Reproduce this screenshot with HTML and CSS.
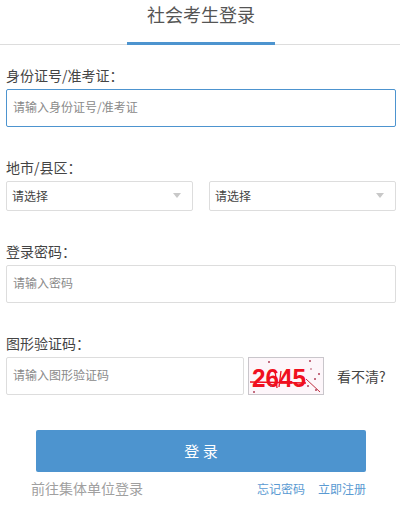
FILE: index.html
```html
<!DOCTYPE html>
<html lang="zh-CN">
<head>
<meta charset="utf-8">
<title>社会考生登录</title>
<link rel="stylesheet" href="styles.css">
</head>
<body>
<header class="tabs"><div class="tab">社会考生登录</div></header>
<form class="form">
  <div class="field first">
    <label class="label">身份证号/准考证：</label>
    <div class="input focus">请输入身份证号/准考证</div>
  </div>
  <div class="field region">
    <label class="label">地市/县区：</label>
    <div class="selects">
      <div class="select">请选择<span class="caret"></span></div>
      <div class="select">请选择<span class="caret"></span></div>
    </div>
  </div>
  <div class="field pass">
    <label class="label">登录密码：</label>
    <div class="input">请输入密码</div>
  </div>
  <div class="field code">
    <label class="label">图形验证码：</label>
    <div class="code-row">
      <div class="input code-input">请输入图形验证码</div>
      <svg class="captcha" width="76" height="38" viewBox="0 0 76 38">
        <rect x="0.5" y="0.5" width="75" height="37" fill="#fdf6fa" stroke="#c9c6cb"/>
        <text x="4" y="30" class="captcha-text" textLength="54" lengthAdjust="spacingAndGlyphs">2645</text>
        <path d="M2 25 L58 26 M27 13 L29 31 M33 14 L31 30" stroke="#f01020" stroke-width="1.3" fill="none"/>
        <path d="M58 22 L72 35" stroke="#c03040" stroke-width="1" fill="none"/>
        <g fill="#b04058"><circle cx="21" cy="5" r="1"/><circle cx="62" cy="4" r="1"/><circle cx="71" cy="17" r="1"/><circle cx="67" cy="22" r="1"/><circle cx="60" cy="29" r="1"/><circle cx="6" cy="35" r="1"/><circle cx="23" cy="29" r="1"/><circle cx="63" cy="12" r="0.8"/><circle cx="68" cy="33" r="1"/></g>
      </svg>
      <span class="refresh">看不清?</span>
    </div>
  </div>
  <button type="button" class="submit">登 录</button>
  <div class="links">
    <span class="unit">前往集体单位登录</span>
    <span class="right"><span class="link">忘记密码</span><span class="link">立即注册</span></span>
  </div>
</form>
</body>
</html>
```
FILE: styles.css
```css
* { box-sizing: border-box; }
html, body { margin: 0; padding: 0; }
body {
  width: 400px;
  height: 506px;
  overflow: hidden;
  background: #fff;
  color: #333;
  font-family: "Noto Sans CJK SC", "Noto Sans", sans-serif;
  font-size: 14px;
}
.tabs {
  height: 45px;
  border-bottom: 1px solid #ddd;
  display: flex;
  justify-content: center;
}
.tab {
  width: 148px;
  height: 45px;
  margin-left: 2px;
  border-bottom: 3px solid #4d94cf;
  text-align: center;
  font-size: 18px;
  line-height: 28px;
  color: #555;
}
.form { padding: 0 4px 0 6px; }
.field { display: flex; flex-direction: column; }
.first { margin-top: 21px; }
.region, .pass, .code { margin-top: 31px; }
.label {
  height: 23px;
  line-height: 18px;
  font-size: 14px;
  color: #444;
}
.input {
  height: 38px;
  border: 1px solid #ddd;
  border-radius: 2px;
  padding-left: 6px;
  line-height: 34px;
  font-size: 12px;
  color: #8a8a8a;
}
.input.focus { border-color: #4d94cf; }
.selects { display: flex; gap: 16px; }
.select {
  flex: 1;
  height: 30px;
  border: 1px solid #ddd;
  border-radius: 2px;
  padding: 0 7px 2px 5px;
  font-size: 12px;
  color: #444;
  display: flex;
  justify-content: space-between;
  align-items: center;
}
.caret {
  width: 0;
  height: 0;
  margin-right: 4px;
  border-left: 4px solid transparent;
  border-right: 4px solid transparent;
  border-top: 5px solid #c8c8c8;
}
.code-row { display: flex; align-items: center; }
.code-input { width: 238px; }
.captcha { margin-left: 4px; display: block; }
.captcha-text {
  font-family: "Liberation Sans", sans-serif;
  font-size: 25px;
  font-weight: 700;
  fill: #f01020;
}
.refresh { margin-left: 13px; font-size: 14px; color: #444; }
.submit {
  display: block;
  width: 330px;
  height: 42px;
  margin: 35px 0 0 30px;
  border: 0;
  border-radius: 2px;
  background: #4d94cf;
  color: #fff;
  font: inherit;
  font-size: 15px;
  padding: 0 0 2px;
}
.links {
  display: flex;
  justify-content: space-between;
  align-items: center;
  margin: 6px 0 0 25px;
  width: 335px;
  height: 20px;
}
.unit { font-size: 14px; color: #a0a0a0; }
.right { display: flex; gap: 13px; }
.link { font-size: 12px; color: #5a9ad2; }
```
